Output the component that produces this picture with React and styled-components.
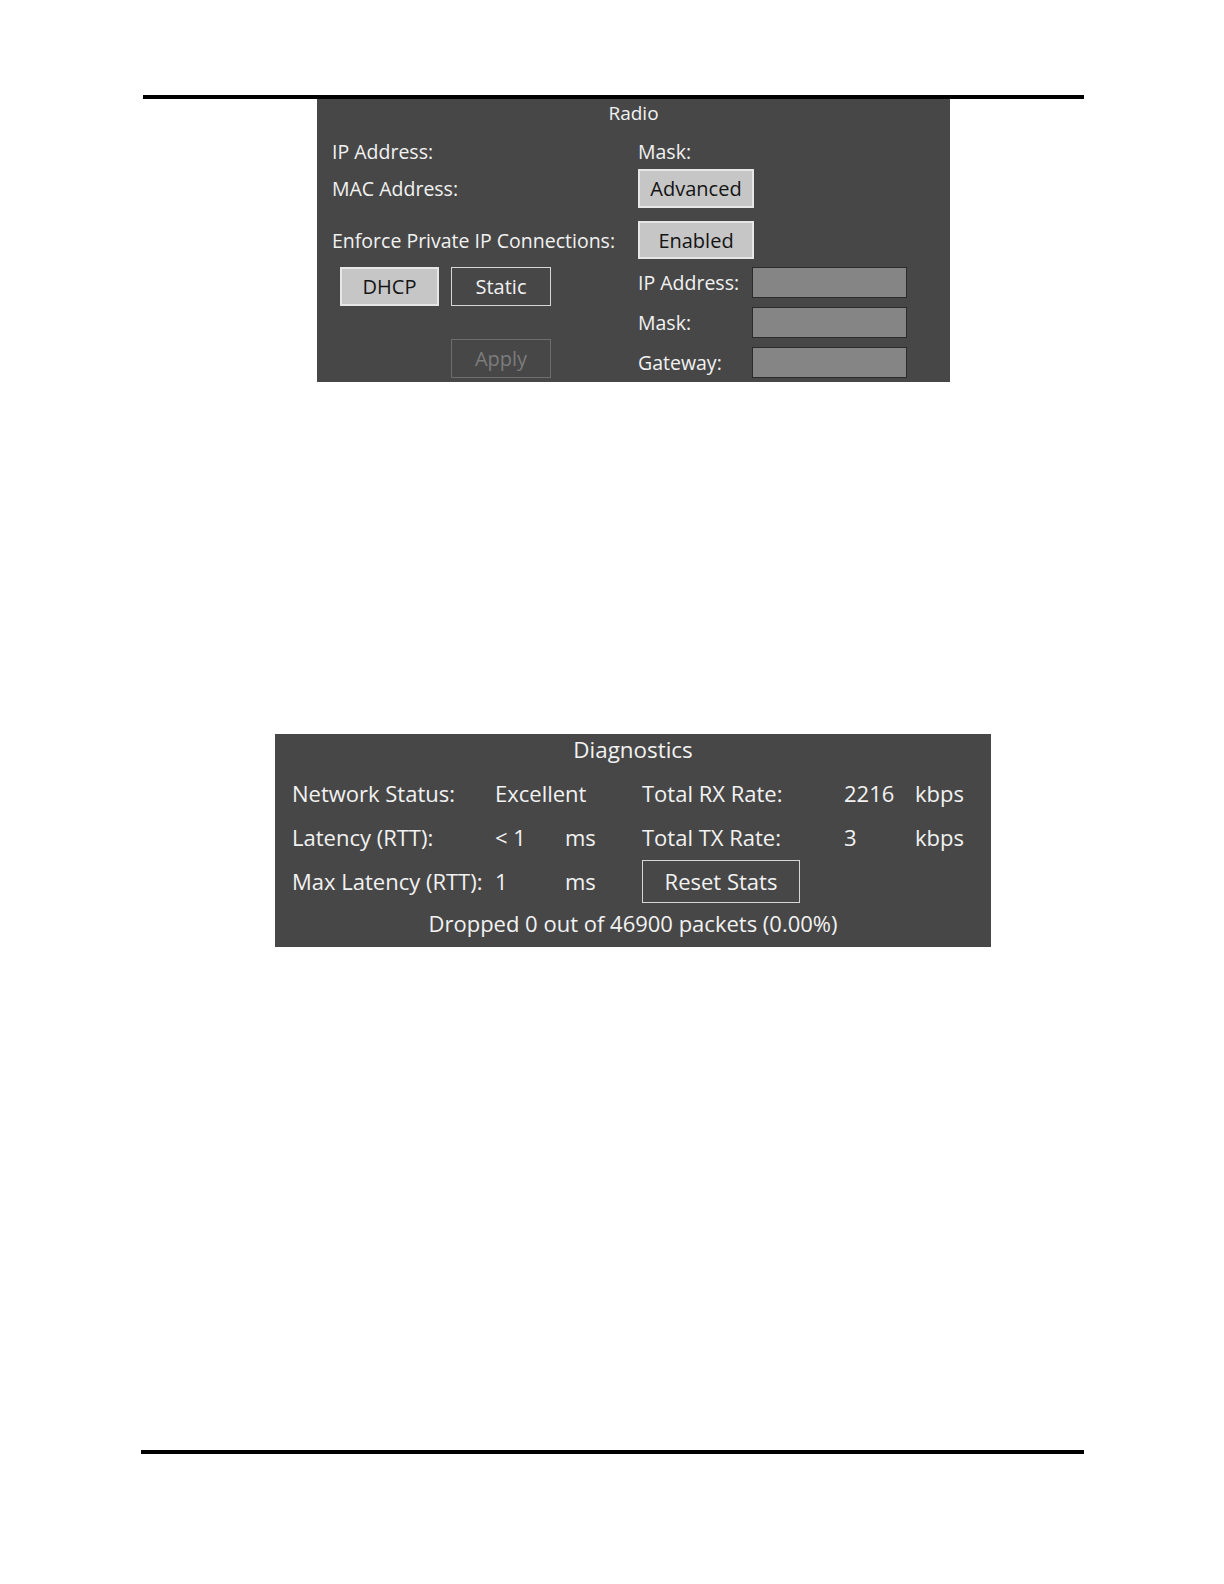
import React from "react";
import styled, { createGlobalStyle } from "styled-components";

const GlobalStyle = createGlobalStyle`
  html, body {
    margin: 0;
    padding: 0;
    background: #ffffff;
  }
  body {
    font-family: "Open Sans", "Noto Sans", "DejaVu Sans", sans-serif;
  }
`;

const Page = styled.div`
  width: 1224px;
  height: 1584px;
  padding-top: 95px;
  box-sizing: border-box;
  background: #fff;
`;

const Rule = styled.div`
  margin-left: ${(p) => p.left}px;
  width: ${(p) => p.width}px;
  height: 4px;
  background: #000;
  margin-top: ${(p) => p.top || 0}px;
`;

const Panel = styled.div`
  margin-left: ${(p) => p.left}px;
  margin-top: ${(p) => p.top || 0}px;
  width: ${(p) => p.width}px;
  height: ${(p) => p.height}px;
  background: #474747;
  color: #f2f2f2;
  box-sizing: border-box;
`;

const Title = styled.div`
  height: ${(p) => p.height}px;
  line-height: ${(p) => p.height}px;
  text-align: center;
  font-size: ${(p) => p.size}px;
  margin-bottom: ${(p) => p.gap || 0}px;
`;

/* ---------- Radio ---------- */

const RadioGrid = styled.div`
  display: grid;
  grid-template-columns: 306px 1fr;
  grid-template-rows: 36px 39px 51px;
  align-items: end;
  padding-left: 15px;
  font-size: 19.5px;
`;

const Label = styled.div`
  display: flex;
  align-items: center;
  height: ${(p) => p.height || 31}px;
  white-space: nowrap;
`;

const Button = styled.button`
  font-family: inherit;
  font-size: ${(p) => p.size || 20}px;
  width: ${(p) => p.width}px;
  height: ${(p) => p.height || 39}px;
  padding: 0;
  margin: 0;
  box-sizing: border-box;
  background: ${(p) => (p.light ? "#c6c6c6" : "transparent")};
  color: ${(p) => (p.light ? "#141414" : p.disabled ? "#7c7c7c" : "#f2f2f2")};
  border-style: solid;
  border-color: ${(p) =>
    p.light ? "#e6e6e6" : p.disabled ? "#6e6e6e" : "#d6d6d6"};
  border-width: ${(p) => (p.light ? 2 : 1)}px;
  cursor: default;
`;

const Lower = styled.div`
  display: grid;
  grid-template-columns: 306px 1fr;
  padding-left: 15px;
  padding-top: 8px;
  font-size: 19.5px;
`;

const ButtonsColumn = styled.div`
  display: flex;
  flex-direction: column;
  padding-left: 8px;
  gap: 33px;
`;

const ButtonRow = styled.div`
  display: flex;
  gap: 12px;
  margin-left: ${(p) => p.indent || 0}px;
`;

const FieldsColumn = styled.div`
  display: flex;
  flex-direction: column;
  gap: 9px;
`;

const FieldRow = styled.div`
  display: grid;
  grid-template-columns: 114px 155px;
  height: 31px;
  align-items: center;
`;

const Field = styled.div`
  height: 31px;
  box-sizing: border-box;
  background: #858585;
  border: 1px solid #2b2b2b;
`;

/* ---------- Diagnostics ---------- */

const DiagGrid = styled.div`
  display: grid;
  grid-template-columns: 203px 70px 77px 202px 71px 1fr;
  grid-auto-rows: 44px;
  padding-left: 17px;
  font-size: 22px;
`;

const Cell = styled.div`
  display: flex;
  align-items: center;
  white-space: nowrap;
`;

const Footer = styled.div`
  height: 40px;
  line-height: 40px;
  text-align: center;
  font-size: 22px;
`;

function RadioPanel() {
  return (
    <Panel left={317} width={633} height={283}>
      <Title height={28} size={19} gap={6}>
        Radio
      </Title>
      <RadioGrid>
        <Label height={36}>IP Address:</Label>
        <Label height={36}>Mask:</Label>
        <Label height={39}>MAC Address:</Label>
        <Button light width={116}>
          Advanced
        </Button>
        <Label height={38}>Enforce Private IP Connections:</Label>
        <Button light width={116} height={38}>
          Enabled
        </Button>
      </RadioGrid>
      <Lower>
        <ButtonsColumn>
          <ButtonRow>
            <Button light width={99}>
              DHCP
            </Button>
            <Button width={100}>Static</Button>
          </ButtonRow>
          <ButtonRow indent={111}>
            <Button disabled width={100}>
              Apply
            </Button>
          </ButtonRow>
        </ButtonsColumn>
        <FieldsColumn>
          {["IP Address:", "Mask:", "Gateway:"].map((name) => (
            <FieldRow key={name}>
              <Label>{name}</Label>
              <Field />
            </FieldRow>
          ))}
        </FieldsColumn>
      </Lower>
    </Panel>
  );
}

function DiagnosticsPanel() {
  return (
    <Panel left={275} top={352} width={716} height={213}>
      <Title height={31} size={22.4} gap={6}>
        Diagnostics
      </Title>
      <DiagGrid>
        <Cell>Network Status:</Cell>
        <Cell>Excellent</Cell>
        <Cell />
        <Cell>Total RX Rate:</Cell>
        <Cell>2216</Cell>
        <Cell>kbps</Cell>

        <Cell>Latency (RTT):</Cell>
        <Cell>&lt; 1</Cell>
        <Cell>ms</Cell>
        <Cell>Total TX Rate:</Cell>
        <Cell>3</Cell>
        <Cell>kbps</Cell>

        <Cell>Max Latency (RTT):</Cell>
        <Cell>1</Cell>
        <Cell>ms</Cell>
        <Cell>
          <Button width={158} height={43} size={22}>
            Reset Stats
          </Button>
        </Cell>
        <Cell />
        <Cell />
      </DiagGrid>
      <Footer>Dropped 0 out of 46900 packets (0.00%)</Footer>
    </Panel>
  );
}

export default function App() {
  return (
    <>
      <GlobalStyle />
      <Page>
        <Rule left={143} width={941} />
        <RadioPanel />
        <DiagnosticsPanel />
        <Rule left={141} width={943} top={503} />
      </Page>
    </>
  );
}
